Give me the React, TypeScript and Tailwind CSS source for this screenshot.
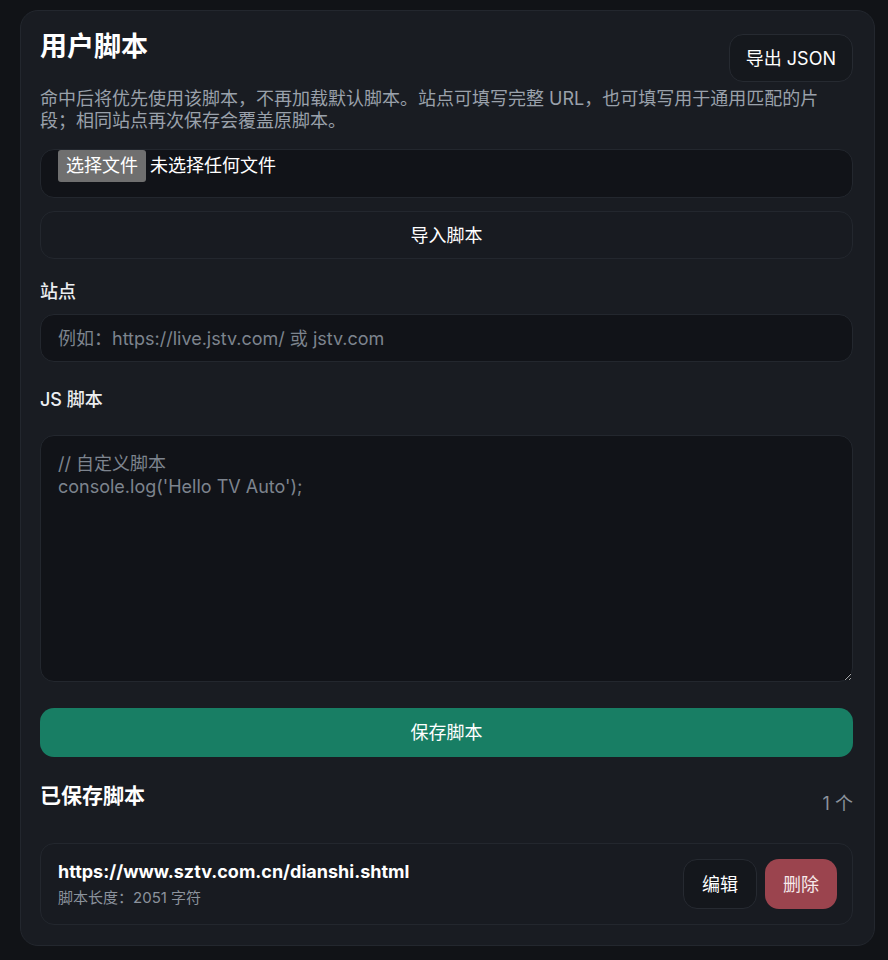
import React from 'react';

const font = { fontFamily: '"Segoe UI", Inter, "Noto Sans CJK SC", sans-serif' };

const savedScripts = [
  { id: 1, site: 'https://www.sztv.com.cn/dianshi.shtml', length: 2051 },
];

export default function App() {
  return (
    <div className="min-h-screen bg-[#111317] pt-[10px] pb-[13px] pl-[20px] pr-[13px] text-[#e6e8eb]" style={font}>
      <div className="rounded-[18px] border border-[#23272e] bg-[#191c22] pl-[19px] pr-[21px] pt-[20px] pb-[20px]">
        <div className="flex items-start justify-between">
          <h1 className="text-[27px] leading-[32px] font-bold text-white">用户脚本</h1>
          <button className="mt-[3px] h-12 rounded-[14px] border border-[#262a31] bg-[#15181d] px-[16px] text-[18px] text-white">
            导出 JSON
          </button>
        </div>

        <p className="mt-[6px] max-w-[785px] text-[18px] leading-[22px] text-[#9aa1ab]">
          命中后将优先使用该脚本，不再加载默认脚本。站点可填写完整 URL，也可填写用于通用匹配的片段；相同站点再次保存会覆盖原脚本。
        </p>

        <div className="mt-[17px] flex h-[49px] items-start rounded-[14px] border border-[#23272e] bg-[#111318] pl-[17px]">
          <span className="h-[32px] rounded-[3px] bg-[#6f6f6f] px-[8px] text-[18px] leading-[32px] text-white">选择文件</span>
          <span className="ml-[4px] text-[18px] leading-[32px] text-white">未选择任何文件</span>
        </div>

        <button className="mt-[13px] h-12 w-full rounded-[14px] border border-[#23272e] bg-[#181b21] text-[18px] text-white">
          导入脚本
        </button>

        <label className="mt-[21px] block text-[18px] leading-[24px] font-medium text-[#eceef1]">站点</label>
        <input
          className="mt-[10px] h-12 w-full rounded-[14px] border border-[#23272e] bg-[#111318] px-[17px] text-[18px] text-white outline-none placeholder:text-[#7d848e]"
          placeholder="例如：https://live.jstv.com/ 或 jstv.com"
        />

        <label className="mt-[26px] block text-[18px] leading-[24px] font-medium text-[#eceef1]">JS 脚本</label>
        <textarea
          className="mt-[23px] block h-[247px] w-full rounded-[14px] border border-[#23272e] bg-[#111318] px-[17px] py-[16px] text-[18px] leading-[23px] text-white outline-none [color-scheme:dark] placeholder:text-[#7d848e]"
          placeholder={"// 自定义脚本\nconsole.log('Hello TV Auto');"}
        />

        <button className="mt-[26px] h-[49px] w-full rounded-[14px] bg-[#187e64] text-[18px] text-white">
          保存脚本
        </button>

        <div className="mt-[25px] flex items-start justify-between">
          <h2 className="text-[21px] leading-[28px] font-bold text-white">已保存脚本</h2>
          <span className="mt-[10px] text-[18px] leading-[24px] text-[#8b929c]">{savedScripts.length} 个</span>
        </div>

        <div className="mt-[27px] flex flex-col gap-3">
          {savedScripts.map(s => (
            <div key={s.id} className="flex h-[82px] items-center justify-between rounded-[14px] border border-[#23272e] bg-[#181b21] pl-[17px] pr-[15px]">
              <div>
                <div className="text-[18px] leading-[24px] font-bold text-white">{s.site}</div>
                <div className="mt-[4px] text-[15px] leading-[20px] text-[#8b929c]">脚本长度：{s.length} 字符</div>
              </div>
              <div className="flex gap-2">
                <button className="h-[50px] w-[74px] rounded-[14px] border border-[#262a31] bg-[#14171c] text-[18px] text-white">编辑</button>
                <button className="h-[50px] w-[72px] rounded-[14px] bg-[#9b444e] text-[18px] text-[#f6e9ea]">删除</button>
              </div>
            </div>
          ))}
        </div>
      </div>
    </div>
  );
}
